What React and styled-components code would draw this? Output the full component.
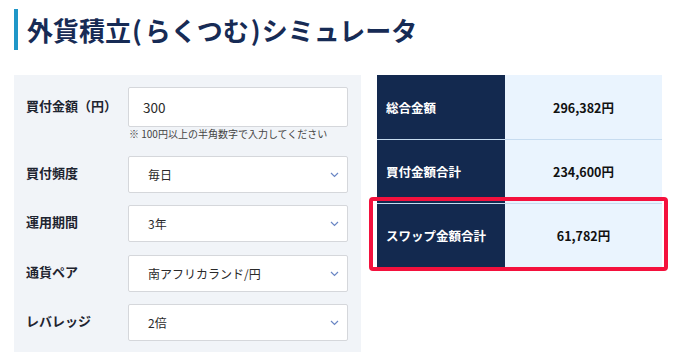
import React from 'react';
import styled, { createGlobalStyle } from 'styled-components';

const Global = createGlobalStyle`
  html, body {
    margin: 0;
    padding: 0;
    background: #fff;
  }
  body {
    font-family: "Noto Sans CJK JP", "Noto Sans", sans-serif;
    color: #222;
  }
`

const Page = styled.div`
  width: 688px;
  height: 363px;
  padding: 9px 0 0 14px;
  box-sizing: border-box;
  overflow: hidden;
`

const Title = styled.h1`
  margin: 0;
  height: 41px;
  display: flex;
  align-items: center;
  border-left: 4px solid #1f97c8;
  padding-left: 9px;
  font-size: 26px;
  font-weight: 700;
  color: #172b55;
`

const Paren = styled.span`
  margin: ${p => (p.$open ? '0 3px 0 1px' : '0 1px 0 2px')};
`

const Main = styled.div`
  display: flex;
  align-items: flex-start;
  gap: 16px;
  margin-top: 25px;
`

const Form = styled.div`
  width: 347px;
  height: 277px;
  box-sizing: border-box;
  background: #f1f4f8;
  padding: 12px 13px 0 12px;
`

const Field = styled.div`
  display: grid;
  grid-template-columns: 102px 1fr;
  margin-top: ${p => p.$gap || 0}px;
`

const Label = styled.div`
  height: ${p => p.$h}px;
  display: flex;
  align-items: center;
  padding-bottom: 4px;
  box-sizing: border-box;
  font-size: 13px;
  font-weight: 700;
  color: #1e2430;
`

const Control = styled.div`
  position: relative;
  height: ${p => p.$h}px;
  background: #fff;
  border: 1px solid #d5d7db;
  border-radius: 2px;
  box-sizing: border-box;
  display: flex;
  align-items: center;
  padding: 0 8px 0 ${p => p.$pad}px;
  font-size: ${p => p.$size}px;
  color: #2a2a2a;
`

const Value = styled.span`
  flex: 1;
`

const Note = styled.div`
  grid-column: 2;
  font-size: 10px;
  line-height: 14px;
  color: #444;
  padding-left: 1px;
`

const Results = styled.div`
  width: 285px;
`

const Row = styled.div`
  position: relative;
  display: grid;
  grid-template-columns: 128px 1fr;
  height: 64px;
  border-top: ${p => (p.$first ? 'none' : '1px solid #c7dcf0')};
  box-sizing: border-box;
`

const Head = styled.div`
  background: #13294f;
  color: #fff;
  font-size: 12.5px;
  font-weight: 700;
  display: flex;
  align-items: center;
  padding-left: 9px;
`

const Amount = styled.div`
  background: #eaf4fe;
  color: #111;
  font-size: 12.5px;
  font-weight: 700;
  display: flex;
  align-items: center;
  justify-content: center;
`

const Highlight = styled.div`
  position: absolute;
  top: -7px;
  left: -8px;
  right: -6px;
  bottom: -4px;
  border: 4px solid #f4113d;
  border-radius: 4px;
  pointer-events: none;
`

const Chevron = () => (
  <svg width="9" height="6" viewBox="0 0 9 6">
    <path d="M1 1 L4.5 4.5 L8 1" fill="none" stroke="#6a86c4" strokeWidth="1.2" />
  </svg>
)

const selects = [
  { label: '買付頻度', value: '毎日', gap: 15 },
  { label: '運用期間', value: '3年', gap: 12 },
  { label: '通貨ペア', value: '南アフリカランド/円', gap: 13 },
  { label: 'レバレッジ', value: '2倍', gap: 12 },
]

const rows = [
  { label: '総合金額', value: '296,382円' },
  { label: '買付金額合計', value: '234,600円' },
  { label: 'スワップ金額合計', value: '61,782円', mark: true },
]

export default function App() {
  return (
    <Page>
      <Global />
      <Title>
        外貨積立<Paren $open>(</Paren>らくつむ<Paren>)</Paren>シミュレータ
      </Title>
      <Main>
        <Form>
          <Field>
            <Label $h={40}>買付金額（円）</Label>
            <Control $h={40} $pad={14} $size={13.5}>
              <Value>300</Value>
            </Control>
            <Note>※ 100円以上の半角数字で入力してください</Note>
          </Field>
          {selects.map(s => (
            <Field key={s.label} $gap={s.gap}>
              <Label $h={37}>{s.label}</Label>
              <Control $h={37} $pad={19} $size={12}>
                <Value>{s.value}</Value>
                <Chevron />
              </Control>
            </Field>
          ))}
        </Form>
        <Results>
          {rows.map((r, i) => (
            <Row key={r.label} $first={i === 0}>
              <Head>{r.label}</Head>
              <Amount>{r.value}</Amount>
              {r.mark && <Highlight />}
            </Row>
          ))}
        </Results>
      </Main>
    </Page>
  );
}
